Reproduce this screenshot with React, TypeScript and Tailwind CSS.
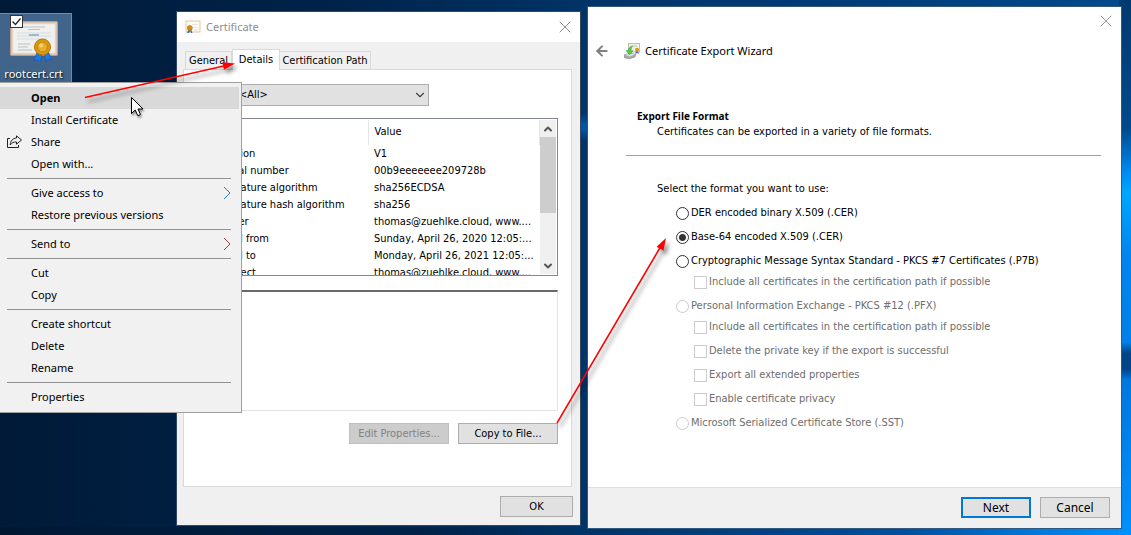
import { ArrowLeft, ChevronDown, ChevronUp, X } from 'lucide-react'

const menuGroups = [
  [
    { label: 'Open', active: true },
    { label: 'Install Certificate' },
    { label: 'Share', share: true },
    { label: 'Open with...' }
  ],
  [
    { label: 'Give access to', arrow: 'text-[#2a7ab8]' },
    { label: 'Restore previous versions' }
  ],
  [{ label: 'Send to', arrow: 'text-[#a83c3c]' }],
  [{ label: 'Cut' }, { label: 'Copy' }],
  [{ label: 'Create shortcut' }, { label: 'Delete' }, { label: 'Rename' }],
  [{ label: 'Properties' }]
] as { label: string; active?: boolean; share?: boolean; arrow?: string }[][]

const fields = [
  ['Version', 'V1'],
  ['Serial number', '00b9eeeeeee209728b'],
  ['Signature algorithm', 'sha256ECDSA'],
  ['Signature hash algorithm', 'sha256'],
  ['Issuer', 'thomas@zuehlke.cloud, www....'],
  ['Valid from', 'Sunday, April 26, 2020 12:05:...'],
  ['Valid to', 'Monday, April 26, 2021 12:05:...'],
  ['Subject', 'thomas@zuehlke.cloud, www....']
]

const formats = [
  { id: 'der', label: 'DER encoded binary X.509 (.CER)', options: [] },
  { id: 'base64', label: 'Base-64 encoded X.509 (.CER)', checked: true, options: [] },
  {
    id: 'p7b',
    label: 'Cryptographic Message Syntax Standard - PKCS #7 Certificates (.P7B)',
    options: ['Include all certificates in the certification path if possible']
  },
  {
    id: 'pfx',
    label: 'Personal Information Exchange - PKCS #12 (.PFX)',
    disabled: true,
    options: [
      'Include all certificates in the certification path if possible',
      'Delete the private key if the export is successful',
      'Export all extended properties',
      'Enable certificate privacy'
    ]
  },
  { id: 'sst', label: 'Microsoft Serialized Certificate Store (.SST)', disabled: true, options: [] }
]

const buttonBase = 'h-[21px] border border-[#adadad] bg-[#e1e1e1] text-center leading-none'

function Wallpaper() {
  return (
    <div className="absolute inset-0 bg-[linear-gradient(90deg,#001a38_0%,#00234a_30%,#003468_52%,#003c78_75%,#004a8c_100%)]">
      <div className="absolute inset-x-0 bottom-0 h-2 bg-[linear-gradient(90deg,#001732_0%,#00234a_38%,#003468_52%,#004f9c_80%,#007be0_92%,#0090ff_100%)]"></div>
      <div className="absolute inset-y-0 right-0 w-3 bg-[linear-gradient(180deg,#003a70_0%,#004a8c_24%,#0088f0_32%,#00a6ff_36%,#0084ee_48%,#0080e8_64%,#004488_66%,#004488_69%,#0078de_71%,#0090ff_100%)]"></div>
      <div className="absolute top-[119px] left-[570px] h-4 w-6 bg-[#0058a8] blur-xs"></div>
    </div>
  )
}

function CertificateArt({ className }: { className: string }) {
  return (
    <svg className={className} viewBox="0 0 48 42" fill="none">
      <rect x="0.5" y="0.5" width="47" height="34" rx="1" fill="#d9c3b0" stroke="#b99f8b" />
      <rect x="3" y="3" width="42" height="29" fill="#f0f0ef" stroke="#efe4da" />
      <path d="M13 6h22M18 8.500h12" stroke="#b9c2c9" />
      <path d="M7 12h34M7 15h34M7 18h30" stroke="#d3dde5" />
      <path d="M19 14h10" stroke="#8ba9bd" strokeWidth="1.500" />
      <path d="M8 23h12M8 26h10M8 29h14" stroke="#b8bfc5" />
      <path d="M27 31l-3 9 4-1 2 2 3-9zM34 31l2 10 2-3 4 1-4-9z" fill="#2277e0" stroke="#0f4fb4" strokeWidth=".5" />
      <circle cx="32.500" cy="26" r="8" fill="#dc9a10" stroke="#b87505" />
      <circle cx="32.500" cy="26" r="5" fill="#e8ae2c" stroke="#c48410" />
      <circle cx="31" cy="24.500" r="2" fill="#f6d470" />
    </svg>
  )
}

function CertificateIcon() {
  return (
    <svg className="size-4" viewBox="0 0 16 16" fill="none">
      <rect x="1" y="2" width="14" height="11" fill="#fdfaf4" stroke="#e6c896" />
      <path d="M7 5.500h6M8 8.500h5M9 11h4" stroke="#e3e6ea" />
      <path d="M3.500 10.500L2 14h2l1-2 1 2h1.500L6 10.500z" fill="#2a6fd0" />
      <circle cx="4.800" cy="9" r="2.500" fill="#d4940f" stroke="#a56a08" strokeWidth=".6" />
    </svg>
  )
}

function ExportIcon() {
  return (
    <svg className="size-4" viewBox="0 0 16 16" fill="none">
      <rect x="4.500" y=".5" width="11" height="8.500" fill="#f4efe4" stroke="#cbbb9f" />
      <path d="M8 3h5" stroke="#b9c4cc" />
      <path d="M12 7.500l-.8 3.500 1.800-1 1.800 1-.8-3.500z" fill="#2a6fd0" />
      <circle cx="13" cy="6.800" r="2" fill="#dc9a18" />
      <path d="M0 12l6-2 6 1.500-1 2.500-6 2-5-1.500z" fill="#a9a9a9" stroke="#7f7f7f" strokeWidth=".5" />
      <path d="M1 12l5-1.500 5 1-5 2z" fill="#dedede" />
      <path d="M8.500 3C5.500 3.500 4.500 5.500 4.300 7.500H2.200L5.500 11.800 9 7.800H6.800C7 5.800 7.600 4.500 8.500 3z" fill="#4fd04a" stroke="#249a2c" strokeWidth=".5" />
    </svg>
  )
}

function ShareIcon() {
  return (
    <svg className="w-4" viewBox="0 0 16 14" fill="none" stroke="#222">
      <path d="M3 3.500H.5v9h11V10" />
      <path d="M9.500 3V.8L14.500 5 9.500 9.200V7C6.500 6.800 4.800 7.800 3.200 10 3.500 6 5.500 3.300 9.500 3z" strokeLinejoin="round" />
    </svg>
  )
}

function DesktopIcon() {
  return (
    <label className="absolute top-[13px] left-0 flex h-[70px] w-[72px] flex-col items-center border border-l-0 border-[#6c8cab] bg-[#40648a] pr-1">
      <CertificateArt className="mt-[7px] h-[42px] w-12" />
      <span className="mt-[3px] text-[11px] leading-4 text-white [text-shadow:1px_1px_2px_#000]">rootcert.crt</span>
      <input type="checkbox" defaultChecked className="absolute top-px left-[10px] size-[13px] appearance-none border border-[#333] bg-white" />
      <svg className="absolute top-px left-[10px] size-[13px]" viewBox="0 0 13 13" fill="none" stroke="#222" strokeWidth="1.300">
        <path d="M2.500 6.500l3 3 5-6" />
      </svg>
    </label>
  )
}

function ContextMenu() {
  return (
    <nav className="absolute top-[82px] left-0 w-[242px] border border-l-0 border-[#a0a0a0] bg-[#f1f1f1] py-1 pr-[2px] text-[11px]">
      {menuGroups.map((group, index) => (
        <div key={index}>
          {index > 0 && <hr className="my-[3px] mr-2 ml-[7px] border-[#919191]" />}
          {group.map((item) => (
            <button
              key={item.label}
              className={`flex h-[22px] w-full items-center pr-2 text-left ${item.active ? 'bg-[#d9d9d9] font-bold' : ''}`}
            >
              <span className="w-[31px] pl-[7px]">{item.share && <ShareIcon />}</span>
              <span className="grow">{item.label}</span>
              {item.arrow && (
                <svg className={`w-2 ${item.arrow}`} viewBox="0 0 8 14" fill="none" stroke="currentColor">
                  <path d="M1 1l6 6-6 6" />
                </svg>
              )}
            </button>
          ))}
        </div>
      ))}
    </nav>
  )
}

function CertificateWindow() {
  return (
    <section className="absolute top-[11px] left-[176px] w-[405px] border border-[#33485f] bg-[#f0f0f0] font-['DejaVu_Sans_Condensed','DejaVu_Sans',sans-serif] text-[11px]">
      <header className="flex h-[30px] items-center bg-white pr-[5px] pl-2 font-['Noto_Sans',sans-serif]">
        <CertificateIcon />
        <h1 className="ml-[5px] grow text-[11px] text-[#8f8f8f]">Certificate</h1>
        <button aria-label="Close" className="text-[#777]">
          <X size={20} strokeWidth={1} />
        </button>
      </header>

      <div className="pt-[7px] pr-2 pb-2 pl-[6px]">
        {/* Tabs */}
        <div className="flex h-5 items-end pl-[2px] leading-none">
          <button className="h-[18px] w-[47px] border border-b-0 border-[#d9d9d9] text-center">General</button>
          <button className="relative -mb-px h-[21px] w-12 border border-b-0 border-[#d9d9d9] bg-white pb-[2px] text-center">Details</button>
          <button className="h-[18px] w-[91px] border border-b-0 border-l-0 border-[#d9d9d9] text-center">Certification Path</button>
        </div>

        <div className="border border-[#d9d9d9] bg-white pr-[13px] pb-[42px] pl-[10px]">
          <div className="flex items-center pt-[14px]">
            <label htmlFor="show" className="w-[38px]">Show:</label>
            <div className="relative">
              <select id="show" className="block h-[22px] w-[197px] appearance-none border border-[#adadad] bg-[#e1e1e1] pl-[6px]">
                <option>&lt;All&gt;</option>
              </select>
              <ChevronDown size={14} strokeWidth={2} className="pointer-events-none absolute top-1 right-[2px] text-[#444]" />
            </div>
          </div>

          {/* Field list */}
          <div className="mt-3 flex h-[158px] justify-between overflow-hidden border border-[#828790] p-px">
            <table className="w-[344px] table-fixed self-start text-left">
              <thead>
                <tr className="h-[25px]">
                  <th className="w-[172px] border-r border-[#e5e5e5] pl-[6px] font-normal">Field</th>
                  <th className="border-r border-[#e5e5e5] pl-[6px] font-normal">Value</th>
                </tr>
              </thead>
              <tbody className="whitespace-nowrap">
                {fields.map(([field, value]) => (
                  <tr key={field} className="h-[17px]">
                    <td className="pl-[23px] leading-[17px]">{field}</td>
                    <td className="pl-[6px] leading-[17px]">{value}</td>
                  </tr>
                ))}
              </tbody>
            </table>
            <div className="flex w-4 flex-col items-center bg-[#f0f0f0]">
              <button aria-label="Scroll up" className="flex h-[17px] items-center text-[#555]">
                <ChevronUp size={12} strokeWidth={4} />
              </button>
              <div className="h-[76px] w-full bg-[#cdcdcd]"></div>
              <button aria-label="Scroll down" className="mt-auto flex h-[17px] items-center text-[#555]">
                <ChevronDown size={12} strokeWidth={4} />
              </button>
            </div>
          </div>

          <textarea
            aria-label="Field value"
            readOnly
            className="mt-[14px] block h-[121px] w-full resize-none border border-t-2 border-[#e3e3e3] border-t-[#696969]"
          />

          <div className="mt-3 flex justify-end gap-[9px]">
            <button disabled className="h-[21px] w-[100px] border border-[#bfbfbf] bg-[#cccccc] text-center leading-none text-[#838383]">Edit Properties...</button>
            <button className={`${buttonBase} w-[100px]`}>Copy to File...</button>
          </div>
        </div>

        <div className="mt-[9px] -mr-px flex justify-end">
          <button className={`${buttonBase} w-[73px]`}>OK</button>
        </div>
      </div>
    </section>
  )
}

function ExportWizard() {
  return (
    <section className="absolute top-[6px] right-[9px] left-[587px] border border-[#33587d] bg-white font-['DejaVu_Sans_Condensed','DejaVu_Sans',sans-serif] text-[11px]">
      <div className="flex justify-end pt-1 pr-[5px]">
        <button aria-label="Close" className="text-[#888]">
          <X size={20} strokeWidth={1} />
        </button>
      </div>

      <header className="flex items-center pt-[10px] pl-[6px] font-['Noto_Sans',sans-serif] text-[11px] leading-5">
        <button aria-label="Back" className="text-[#808080]">
          <ArrowLeft size={16} strokeWidth={3} />
        </button>
        <div className="ml-[14px]">
          <ExportIcon />
        </div>
        <h1 className="ml-[5px]">Certificate Export Wizard</h1>
      </header>

      <div className="pt-[47px] pr-5 pl-[38px]">
        <div className="pl-[11px] leading-4">
          <h2 className="font-['Open_Sans',sans-serif] text-[10px] leading-4 font-bold">Export File Format</h2>
          <p className="pl-5">Certificates can be exported in a variety of file formats.</p>
        </div>
        <hr className="mt-[15px] border-[#a0a0a0]" />

        <fieldset className="mt-[25px] pb-[53px] pl-[31px] whitespace-nowrap">
          <legend className="leading-4">Select the format you want to use:</legend>
          <div className="mt-[6px] flex flex-col gap-[3px] pl-[19px]">
            {formats.map((format) => (
              <div key={format.id}>
                <div className={`flex h-[21px] items-center gap-[2px] ${format.disabled ? 'text-[#6d6d6d]' : ''}`}>
                  <input
                    id={format.id}
                    type="radio"
                    name="format"
                    defaultChecked={format.checked}
                    disabled={format.disabled}
                    className="size-[13px] shrink-0 appearance-none rounded-full border border-[#333] bg-white checked:bg-[radial-gradient(circle,#333_3px,#fff_4px)] disabled:border-[#cccccc]"
                  />
                  <label htmlFor={format.id}>{format.label}</label>
                </div>
                {format.options.length > 0 && (
                  <div className="flex flex-col gap-[3px] pl-[18px] text-[#6d6d6d]">
                    {format.options.map((option) => (
                      <label key={option} className="flex h-[21px] items-center gap-[2px]">
                        <input type="checkbox" disabled className="size-[13px] shrink-0 appearance-none border border-[#cccccc] bg-white" />
                        {option}
                      </label>
                    ))}
                  </div>
                )}
              </div>
            ))}
          </div>
        </fieldset>
      </div>

      <footer className="flex justify-end gap-[9px] border-t border-[#dfdfdf] bg-[#f0f0f0] pt-[9px] pr-[11px] pb-[10px] font-['Noto_Sans',sans-serif] text-[12px]">
        <button className="h-[21px] w-[70px] border-2 border-[#0078d7] bg-[#e1e1e1] text-center leading-none">Next</button>
        <button className={`${buttonBase} w-[70px]`}>Cancel</button>
      </footer>
    </section>
  )
}

// Red pointer arrows and the mouse cursor drawn over the windows
function Annotations() {
  return (
    <svg className="pointer-events-none absolute top-0 left-0 h-[535px] w-[700px]" viewBox="0 0 700 535" fill="none">
      <g className="drop-shadow-[3px_4px_2px_rgba(0,0,0,0.45)]">
        <path d="M85 97.500L226 65.500" stroke="#f00" strokeWidth="1.500" />
        <path d="M235 63.500L224 69.800 222.400 62.200z" fill="#f00" />
        <path d="M557 423L661 246" stroke="#f00" strokeWidth="1.500" />
        <path d="M666 238L663.500 250.800 656.600 246.800z" fill="#f00" />
      </g>
      <path
        className="drop-shadow-[1px_2px_1px_rgba(0,0,0,0.4)]"
        d="M131.500 97.500v16l3.700-3.500 2.600 5.700 2.700-1.200-2.500-5.500h5z"
        fill="#fff"
        stroke="#000"
      />
    </svg>
  )
}

export default function App() {
  return (
    <main className="relative min-h-screen overflow-hidden font-['Noto_Sans',sans-serif] text-black">
      <Wallpaper />
      <DesktopIcon />
      <CertificateWindow />
      <ExportWizard />
      <ContextMenu />
      <Annotations />
    </main>
  )
}
